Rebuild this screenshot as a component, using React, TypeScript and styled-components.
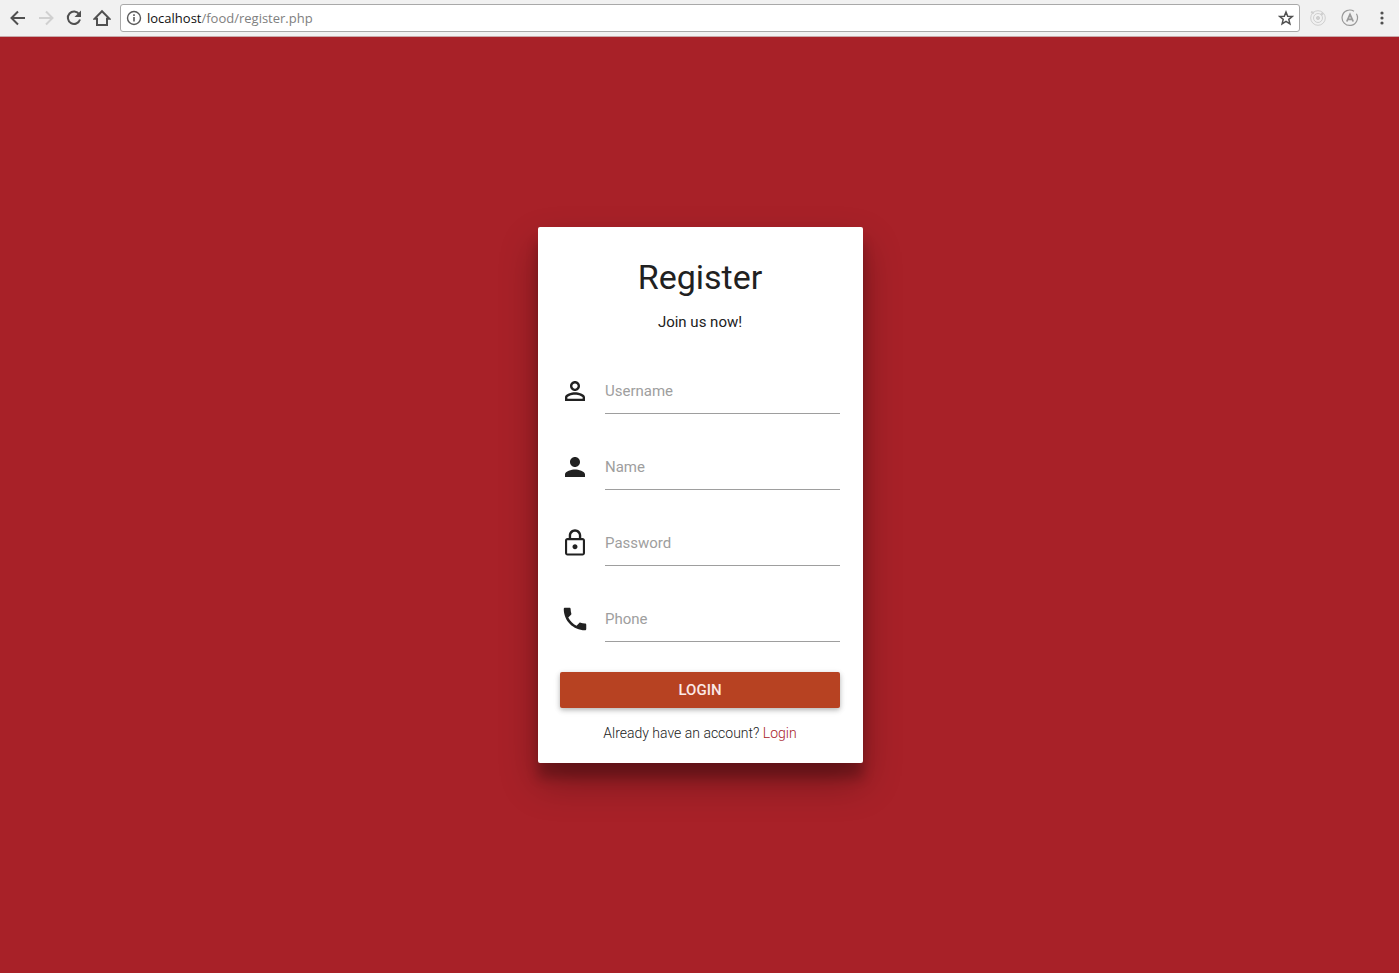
import React from "react";
import styled, { createGlobalStyle } from "styled-components";

const GlobalStyle = createGlobalStyle`
  *, *::before, *::after { box-sizing: border-box; }
  html, body, #root { height: 100%; }
  body { margin: 0; font-family: Roboto, sans-serif; color: #212121; }
`;

const Page = styled.div`
  min-height: 100%;
  display: flex;
  flex-direction: column;
  background: #a82128;
`;

const Toolbar = styled.header`
  display: flex;
  align-items: center;
  gap: 4px;
  height: 37px;
  padding: 0 5px 1px 6px;
  background: #f1f1f1;
  border-bottom: 1px solid #c9a9aa;
`;

const ToolButton = styled.button`
  display: flex;
  align-items: center;
  justify-content: center;
  width: 24px;
  height: 24px;
  padding: 0;
  border: 0;
  background: none;
  color: #505050;

  &:disabled { color: #d0d0d0; }
`;

const Actions = styled.div`
  display: flex;
  gap: 8px;
  padding-left: 2px;
`;

const AddressBar = styled.div`
  flex: 1;
  display: flex;
  align-items: center;
  gap: 5px;
  height: 28px;
  margin-left: 2px;
  padding: 0 1px 0 5px;
  background: #fff;
  border: 1px solid #a9a9a9;
  border-radius: 3px;
`;

const Url = styled.div`
  flex: 1;
  font: 13px/20px "Open Sans", sans-serif;
  color: #808080;
`;

const Host = styled.span`
  color: #111;
`;

const Main = styled.main`
  flex: 1;
  display: flex;
  align-items: center;
  justify-content: center;
  padding: 0 0 20px 2px;
`;

const Card = styled.form`
  width: 325px;
  padding: 29px 23px 20px 22px;
  background: #fff;
  border-radius: 2px;
  box-shadow: 0 19px 38px rgba(0, 0, 0, 0.3),
    0 15px 12px rgba(0, 0, 0, 0.22);
`;

const Title = styled.h1`
  margin: 0;
  font-size: 34px;
  font-weight: 400;
  line-height: 42px;
  text-align: center;
`;

const Subtitle = styled.p`
  margin: 12px 0 34px;
  font-size: 15px;
  font-weight: 400;
  line-height: 24px;
  text-align: center;
`;

const Field = styled.label`
  display: flex;
  align-items: center;
  gap: 15px;
  margin-bottom: 30px;
`;

const Input = styled.input`
  flex: 1;
  min-width: 0;
  height: 46px;
  padding: 0;
  border: 0;
  border-bottom: 1px solid #9e9e9e;
  background: none;
  font: 15px Roboto, sans-serif;
  color: #212121;
  outline: none;

  &::placeholder { color: #9e9e9e; opacity: 1; }
`;

const Submit = styled.button`
  display: block;
  width: 100%;
  height: 36px;
  padding: 0;
  border: 0;
  border-radius: 2px;
  background: #b74222;
  color: #fbe9e7;
  font: 500 15px/36px Roboto, sans-serif;
  text-transform: uppercase;
  box-shadow: 0 2px 5px 0 rgba(0, 0, 0, 0.26),
    0 2px 10px 0 rgba(0, 0, 0, 0.06);
`;

const Footer = styled.p`
  margin: 15px 0 0;
  font-size: 14px;
  font-weight: 300;
  line-height: 20px;
  text-align: center;
`;

const Link = styled.a`
  color: #a82128;
  text-decoration: none;
`;

const fields = [
  {
    label: "Username",
    type: "text",
    icon: "M12 5.9c1.16 0 2.1.94 2.1 2.1s-.94 2.1-2.1 2.1S9.9 9.16 9.9 8s.94-2.1 2.1-2.1m0 9c2.97 0 6.1 1.46 6.1 2.1v1.1H5.9V17c0-.64 3.13-2.1 6.1-2.1M12 4C9.79 4 8 5.79 8 8s1.79 4 4 4 4-1.79 4-4-1.79-4-4-4zm0 9c-2.67 0-8 1.34-8 4v3h16v-3c0-2.66-5.33-4-8-4z",
  },
  {
    label: "Name",
    type: "text",
    icon: "M12 12c2.21 0 4-1.79 4-4s-1.79-4-4-4-4 1.79-4 4 1.79 4 4 4zm0 2c-2.67 0-8 1.34-8 4v2h16v-2c0-2.66-5.33-4-8-4z",
  },
  {
    label: "Password",
    type: "password",
    icon: "M12 17c1.1 0 2-.9 2-2s-.9-2-2-2-2 .9-2 2 .9 2 2 2zm6-9h-1V6c0-2.76-2.24-5-5-5S7 3.24 7 6v2H6c-1.1 0-2 .9-2 2v10c0 1.1.9 2 2 2h12c1.1 0 2-.9 2-2V10c0-1.1-.9-2-2-2zM8.9 6c0-1.71 1.39-3.1 3.1-3.1s3.1 1.39 3.1 3.1v2H8.9V6zM18.3 20.3H5.7V9.7h12.6v10.6z",
  },
  {
    label: "Phone",
    type: "tel",
    icon: "M6.62 10.79c1.44 2.83 3.76 5.14 6.59 6.59l2.2-2.2c.27-.27.67-.36 1.02-.24 1.12.37 2.33.57 3.57.57.55 0 1 .45 1 1V20c0 .55-.45 1-1 1-9.39 0-17-7.61-17-17 0-.55.45-1 1-1h3.5c.55 0 1 .45 1 1 0 1.25.2 2.45.57 3.57.11.35.03.74-.25 1.02l-2.2 2.2z",
  },
];

const stroke = {
  width: 18,
  height: 18,
  viewBox: "0 0 18 18",
  fill: "none",
  stroke: "currentColor",
  strokeWidth: 2,
};

export default function App() {
  return (
    <Page>
      <GlobalStyle />
      <Toolbar>
        <ToolButton aria-label="Back">
          <svg {...stroke}><path d="M16 9H3M9 2.5 2.5 9 9 15.5" /></svg>
        </ToolButton>
        <ToolButton aria-label="Forward" disabled>
          <svg {...stroke}><path d="M2 9h13M9 2.5 15.5 9 9 15.5" /></svg>
        </ToolButton>
        <ToolButton aria-label="Reload">
          <svg {...stroke}>
            <path d="M14.2 5.2A6.2 6.2 0 1 0 15 10.5" />
            <path d="M16 1.5V8H9.5z" fill="currentColor" stroke="none" />
          </svg>
        </ToolButton>
        <ToolButton aria-label="Home">
          <svg {...stroke}><path d="M1.5 9.8H4V16h10V9.8h2.5L9 2.2z" /></svg>
        </ToolButton>
        <AddressBar>
          <svg width="16" height="16" viewBox="0 0 16 16" fill="none" stroke="#5a5a5a">
            <circle cx="8" cy="8" r="6.5" strokeWidth="1.4" />
            <path d="M8 7v4.5M8 4.3v1.6" strokeWidth="1.6" />
          </svg>
          <Url><Host>localhost</Host>/food/register.php</Url>
          <ToolButton aria-label="Bookmark this page">
            <svg width="16" height="16" viewBox="0 0 16 16" fill="none" stroke="currentColor" strokeWidth="1.5">
              <path d="m8 2 1.7 4.2 4.6.3-3.5 2.9 1.1 4.4L8 11.4l-3.9 2.4 1.1-4.4-3.5-2.9 4.6-.3z" />
            </svg>
          </ToolButton>
        </AddressBar>
        <Actions>
          <ToolButton aria-label="Orbit extension">
            <svg {...stroke} stroke="#cfcfcf" strokeWidth={1}>
              <circle cx="9" cy="9" r="7.3" />
              <circle cx="9" cy="9" r="4.5" />
              <circle cx="9" cy="9" r="1.6" fill="#cfcfcf" />
              <circle cx="13" cy="5" r="1" fill="#cfcfcf" />
              <path d="m2 3 3 1" strokeWidth="2" />
            </svg>
          </ToolButton>
          <ToolButton aria-label="A extension">
            <svg {...stroke} stroke="#999" strokeWidth={1.2}>
              <path d="M13 2.3A7.7 7.7 0 1 0 15.4 4.8" />
              <path d="M5.8 12.5 9 5.5l3.2 7M7 10.3h4" strokeWidth="1.8" />
            </svg>
          </ToolButton>
          <ToolButton aria-label="Menu">
            <svg {...stroke} fill="currentColor" stroke="none">
              <circle cx="9" cy="4" r="1.6" />
              <circle cx="9" cy="9" r="1.6" />
              <circle cx="9" cy="14" r="1.6" />
            </svg>
          </ToolButton>
        </Actions>
      </Toolbar>
      <Main>
        <Card onSubmit={(e) => e.preventDefault()}>
          <Title>Register</Title>
          <Subtitle>Join us now!</Subtitle>
          {fields.map((f) => (
            <Field key={f.label}>
              <svg width="30" height="30" viewBox="0 0 24 24" fill="#212121" aria-hidden="true">
                <path d={f.icon} fillRule="evenodd" />
              </svg>
              <Input type={f.type} placeholder={f.label} aria-label={f.label} />
            </Field>
          ))}
          <Submit type="submit">Login</Submit>
          <Footer>
            Already have an account? <Link href="#login">Login</Link>
          </Footer>
        </Card>
      </Main>
    </Page>
  );
}
